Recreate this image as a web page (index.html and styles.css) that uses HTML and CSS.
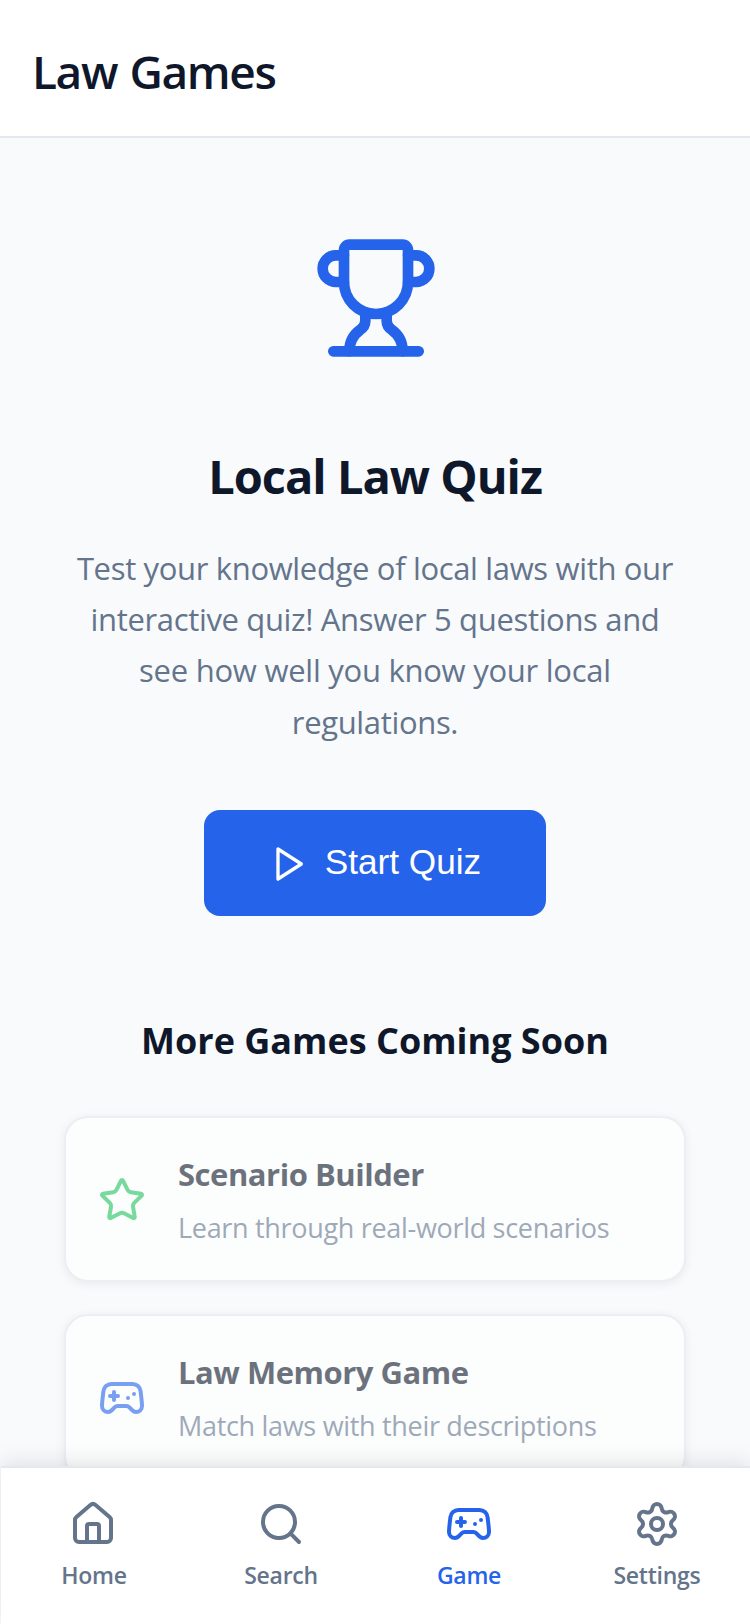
FILE: index.html
```html
<!DOCTYPE html>
<html lang="en">
<head>
<meta charset="utf-8">
<title>Law Games</title>
<link rel="stylesheet" href="styles.css">
</head>
<body>
<div class="app">
  <header class="header"><h1 class="header-title">Law Games</h1></header>
  <main class="content">
    <svg class="icon trophy" viewBox="0 0 24 24"><path d="M10 14.66v1.626a2 2 0 0 1-.976 1.696A5 5 0 0 0 7 21.978"/><path d="M14 14.66v1.626a2 2 0 0 0 .976 1.696A5 5 0 0 1 17 21.978"/><path d="M18 9h1.5a1 1 0 0 0 0-5H18"/><path d="M4 22h16"/><path d="M6 9a6 6 0 0 0 12 0V3a1 1 0 0 0-1-1H7a1 1 0 0 0-1 1z"/><path d="M6 9H4.5a1 1 0 0 1 0-5H6"/></svg>
    <h2 class="quiz-title">Local Law Quiz</h2>
    <p class="quiz-text">Test your knowledge of local laws with our<br>interactive quiz! Answer 5 questions and<br><span class="loose">see how well you know your local</span><br>regulations.</p>
    <button class="start">
      <svg class="icon play" viewBox="0 0 24 24"><path d="M6 3l14 9-14 9z"/></svg>
      <span class="start-label">Start Quiz</span>
    </button>
    <h3 class="more-title">More Games Coming Soon</h3>
    <section class="cards">
      <article class="card">
        <svg class="icon card-icon green" viewBox="0 0 24 24"><path d="M11.525 2.295a.53.53 0 0 1 .95 0l2.31 4.679a2.123 2.123 0 0 0 1.595 1.16l5.166.756a.53.53 0 0 1 .294.904l-3.736 3.638a2.123 2.123 0 0 0-.611 1.878l.882 5.14a.53.53 0 0 1-.771.56l-4.618-2.428a2.122 2.122 0 0 0-1.973 0L6.396 21.01a.53.53 0 0 1-.77-.56l.881-5.139a2.122 2.122 0 0 0-.611-1.879L2.16 9.795a.53.53 0 0 1 .294-.906l5.165-.755a2.122 2.122 0 0 0 1.597-1.16z"/></svg>
        <div class="card-body"><h4 class="card-title">Scenario Builder</h4><p class="card-text">Learn through real-world scenarios</p></div>
      </article>
      <article class="card">
        <svg class="icon card-icon blue" viewBox="0 0 24 24"><path d="M6 11h4M8 9v4M15 12h.01M18 10h.01"/><path d="M17.32 5H6.68a4 4 0 0 0-3.978 3.59c-.006.052-.01.101-.017.152C2.604 9.416 2 14.456 2 16a3 3 0 0 0 3 3c1 0 1.5-.5 2-1l1.414-1.414A2 2 0 0 1 9.828 16h4.344a2 2 0 0 1 1.414.586L17 18c.5.5 1 1 2 1a3 3 0 0 0 3-3c0-1.545-.604-6.584-.685-7.258-.007-.05-.011-.1-.017-.151A4 4 0 0 0 17.32 5z"/></svg>
        <div class="card-body"><h4 class="card-title">Law Memory Game</h4><p class="card-text">Match laws with their descriptions</p></div>
      </article>
    </section>
  </main>
  <nav class="nav">
    <a class="tab"><svg class="icon tab-icon" viewBox="0 0 24 24"><path d="M15 21v-8a1 1 0 0 0-1-1h-4a1 1 0 0 0-1 1v8"/><path d="M3 10a2 2 0 0 1 .709-1.528l7-5.999a2 2 0 0 1 2.582 0l7 5.999A2 2 0 0 1 21 10v9a2 2 0 0 1-2 2H5a2 2 0 0 1-2-2z"/></svg><span>Home</span></a>
    <a class="tab"><svg class="icon tab-icon" viewBox="0 0 24 24"><circle cx="11" cy="11" r="8"/><path d="m21 21-4.3-4.3"/></svg><span>Search</span></a>
    <a class="tab active"><svg class="icon tab-icon" viewBox="0 0 24 24"><path d="M6 11h4M8 9v4M15 12h.01M18 10h.01"/><path d="M17.32 5H6.68a4 4 0 0 0-3.978 3.59c-.006.052-.01.101-.017.152C2.604 9.416 2 14.456 2 16a3 3 0 0 0 3 3c1 0 1.5-.5 2-1l1.414-1.414A2 2 0 0 1 9.828 16h4.344a2 2 0 0 1 1.414.586L17 18c.5.5 1 1 2 1a3 3 0 0 0 3-3c0-1.545-.604-6.584-.685-7.258-.007-.05-.011-.1-.017-.151A4 4 0 0 0 17.32 5z"/></svg><span>Game</span></a>
    <a class="tab"><svg class="icon tab-icon" viewBox="0 0 24 24"><path d="M9.671 4.136a2.34 2.34 0 0 1 4.659 0 2.34 2.34 0 0 0 3.319 1.915 2.34 2.34 0 0 1 2.33 4.033 2.34 2.34 0 0 0 0 3.831 2.34 2.34 0 0 1-2.33 4.033 2.34 2.34 0 0 0-3.319 1.915 2.34 2.34 0 0 1-4.659 0 2.34 2.34 0 0 0-3.32-1.915 2.34 2.34 0 0 1-2.33-4.033 2.34 2.34 0 0 0 0-3.831A2.34 2.34 0 0 1 6.35 6.051a2.34 2.34 0 0 0 3.319-1.915"/><circle cx="12" cy="12" r="3"/></svg><span>Settings</span></a>
  </nav>
</div>
</body>
</html>
```
FILE: styles.css
```css
* { box-sizing: border-box; margin: 0; padding: 0; }
body { background: #f8fafc; font-family: "Segoe UI", "Open Sans", "Noto Sans", sans-serif; color: #0f172a; overflow: hidden; }
.app { height: 1624px; display: flex; flex-direction: column; overflow: hidden; }
.icon { display: block; flex: none; fill: none; stroke: currentColor; stroke-width: 2; stroke-linecap: round; stroke-linejoin: round; }
.header { flex: none; height: 138px; padding: 38.6px 32px 0; background: #fff; border-bottom: 2px solid #e2e8f0; }
.header-title { font-size: 46px; line-height: 64px; font-weight: 600; letter-spacing: -1.4px; word-spacing: 2px; }
.content { flex: 1; min-height: 0; overflow: hidden; padding: 96px 64px 0; display: flex; flex-direction: column; align-items: center; text-align: center; }
.trophy { width: 128px; height: 128px; margin-left: 2px; color: #2563eb; }
.quiz-title { margin-top: 82px; font-size: 47px; line-height: 64px; font-weight: 700; letter-spacing: -1px; }
.quiz-text { margin-top: 35px; font-size: 31px; line-height: 51.2px; color: #64748b; white-space: nowrap; letter-spacing: -.34px; }
.loose { letter-spacing: -.26px; }
.start { margin-top: 62.2px; flex: none; width: 342px; height: 106px; display: flex; align-items: center; justify-content: center; gap: 16px; border: 0; border-radius: 16px; background: #2563eb; color: #fff; font: 35.2px "Liberation Sans", Arial, sans-serif; }
.play { width: 40px; height: 40px; margin: 1.6px .7px 0 -.7px; }
.start-label { padding-bottom: 2px; }
.more-title { margin-top: 100px; font-size: 36px; line-height: 50px; font-weight: 700; }
.cards { align-self: stretch; margin-top: 50px; display: flex; flex-direction: column; gap: 32px; text-align: left; }
.card { height: 166px; flex: none; display: flex; align-items: center; gap: 32px; padding: 0 32px; background: #fff; border: 2px solid #e2e8f0; border-radius: 24px; box-shadow: 0 2px 8px rgba(0,0,0,.1); opacity: .6; }
.card-icon { width: 48px; height: 48px; margin-top: 2px; }
.card-body { padding-top: 1.5px; }
.green { color: #22c55e; }
.blue { color: #2563eb; }
.card-title { font-size: 31px; line-height: 44px; font-weight: 700; letter-spacing: -.47px; }
.card-text { margin-top: 11.5px; font-size: 27px; line-height: 40px; color: #64748b; letter-spacing: -.31px; }
.nav { flex: none; height: 158px; margin-left: 1px; display: grid; grid-template-columns: 186px 188px 188px 188px; background: #fff; border-top: 2px solid #e2e8f0; box-shadow: 0 -4px 20px rgba(0,0,0,.1); position: relative; }
.tab { display: flex; flex-direction: column; align-items: center; padding-top: 32px; gap: 10px; color: #64748b; font-size: 23px; line-height: 34px; font-weight: 600; letter-spacing: -.25px; }
.tab.active { color: #2563eb; }
.tab-icon { width: 48px; height: 48px; }
.tab:first-child .tab-icon { margin-right: 2px; }
```
